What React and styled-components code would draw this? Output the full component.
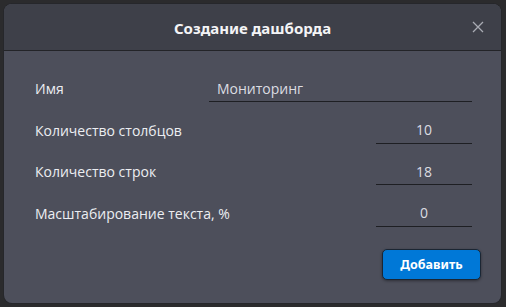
import React, { useState } from 'react';
import styled, { createGlobalStyle } from 'styled-components';

const Global = createGlobalStyle`
  html, body {
    margin: 0;
    padding: 0;
    background: #2b2b2d;
  }
  body {
    font-family: "Noto Sans", "Open Sans", sans-serif;
  }
`;

const Page = styled.div`
  width: 506px;
  height: 307px;
  padding: 4px 5px 4px 4px;
  box-sizing: border-box;
`;

const Dialog = styled.div`
  height: 100%;
  display: flex;
  flex-direction: column;
  border-radius: 8px;
  overflow: hidden;
  background: #4d4f5b;
  box-shadow: 0 0 0 1px #26272b;
`;

const Header = styled.div`
  height: 46px;
  flex: none;
  position: relative;
  display: flex;
  align-items: center;
  justify-content: center;
  background: #3e4049;
  border-bottom: 1px solid #232428;
`;

const Title = styled.h2`
  margin: 0;
  padding-top: 2px;
  font-size: 15px;
  font-weight: 700;
  color: #f4f4f6;
`;

const Close = styled.button`
  position: absolute;
  right: 17px;
  top: 17px;
  width: 12px;
  height: 12px;
  padding: 0;
  border: 0;
  background: transparent;
  cursor: pointer;
  display: flex;
`;

const Body = styled.div`
  flex: 1;
  display: flex;
  flex-direction: column;
  padding: 17px 29px 0 31px;
`;

const Row = styled.div`
  display: flex;
  align-items: center;
  justify-content: space-between;
  height: 41.5px;
`;

const Label = styled.label`
  font-family: "Open Sans", "Noto Sans", sans-serif;
  font-size: 14px;
  color: #eceef2;
`;

const Field = styled.input`
  width: ${(p) => p.$w}px;
  box-sizing: border-box;
  height: 27px;
  padding: 0 0 0 ${(p) => (p.$center ? 0 : 8)}px;
  border: 0;
  border-bottom: 1px solid #1e1f23;
  background: transparent;
  outline: none;
  font-family: "Open Sans", "Noto Sans", sans-serif;
  font-size: 14px;
  color: #dcdde2;
  text-align: ${(p) => (p.$center ? 'center' : 'left')};
  caret-color: #fff;
`;

const Footer = styled.div`
  display: flex;
  justify-content: flex-end;
  margin-top: 15px;
  margin-right: -9px;
`;

const AddButton = styled.button`
  width: 99px;
  height: 31px;
  border-radius: 5px;
  border: 1px solid #1b2633;
  background: #0078d7;
  color: #fff;
  font-family: inherit;
  font-size: 12.5px;
  font-weight: 700;
  box-shadow: 0 1px 3px rgba(0, 0, 0, 0.4);
  cursor: pointer;
`;

const App = () => {
  const [name, setName] = useState('Мониторинг');
  const [cols, setCols] = useState('10');
  const [rows, setRows] = useState('18');
  const [scale, setScale] = useState('0');
  return (
    <Page>
      <Global />
      <Dialog>
        <Header>
          <Title>Создание дашборда</Title>
          <Close aria-label="close">
            <svg width="12" height="12" viewBox="0 0 12 12">
              <path d="M1 1 L11 11 M11 1 L1 11" stroke="#a9abb3" strokeWidth="1.3" />
            </svg>
          </Close>
        </Header>
        <Body>
          <Row>
            <Label>Имя</Label>
            <Field $w={263} value={name} onChange={(e) => setName(e.target.value)} />
          </Row>
          <Row>
            <Label>Количество столбцов</Label>
            <Field $w={96} $center value={cols} onChange={(e) => setCols(e.target.value)} />
          </Row>
          <Row>
            <Label>Количество строк</Label>
            <Field $w={96} $center value={rows} onChange={(e) => setRows(e.target.value)} />
          </Row>
          <Row>
            <Label>Масштабирование текста, %</Label>
            <Field $w={96} $center value={scale} onChange={(e) => setScale(e.target.value)} />
          </Row>
          <Footer>
            <AddButton>Добавить</AddButton>
          </Footer>
        </Body>
      </Dialog>
    </Page>
  );
};

export default App;
